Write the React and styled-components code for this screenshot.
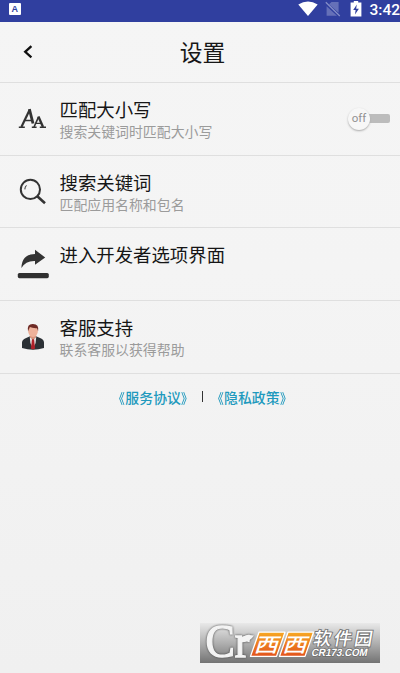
import styled, { createGlobalStyle } from "styled-components";

export default function App() {
    return (
        <>
            <GlobalStyle />
            <Tela>
                <BarraStatus>
                    <IconeApp>A</IconeApp>
                    <Indicadores>
                        <Wifi />
                        <SemChip />
                        <Bateria />
                        <Hora>3:42</Hora>
                    </Indicadores>
                </BarraStatus>
                <Topo>
                    <Voltar aria-label="返回">
                        <svg width="10" height="14" viewBox="0 0 10 14">
                            <path d="M8.4 1.2L2.2 6.8L8.4 12.4" fill="none" stroke="#111" strokeWidth="2.3" />
                        </svg>
                    </Voltar>
                    <Titulo>设置</Titulo>
                </Topo>
                <Item icone={<Letras />} nome="匹配大小写" descricao="搜索关键词时匹配大小写">
                    <Chave><Botao>off</Botao></Chave>
                </Item>
                <Item icone={<Lupa />} nome="搜索关键词" descricao="匹配应用名称和包名" />
                <Item icone={<Seta />} nome="进入开发者选项界面" descricao={"\u00a0"} />
                <Item icone={<Atendente />} nome="客服支持" descricao="联系客服以获得帮助" />
                <Rodape>
                    <Link><Aspas $lado="right">《</Aspas>服务协议<Aspas $lado="left">》</Aspas></Link>
                    <Separador />
                    <Link><Aspas $lado="right">《</Aspas>隐私政策<Aspas $lado="left">》</Aspas></Link>
                </Rodape>
                <Marca />
            </Tela>
        </>
    )
}

function Item({ icone, nome, descricao, children }) {
    return (
        <Linha>
            <Icone>{icone}</Icone>
            <Textos>
                <Nome>{nome}</Nome>
                <Descricao>{descricao}</Descricao>
            </Textos>
            {children}
        </Linha>
    )
}

function Wifi() {
    return (
        <svg width="20" height="16" viewBox="0 0 20 16">
            <path d="M0.3 3.6Q10 -2.6 19.7 3.6L10 15Z" fill="#fff" />
        </svg>
    )
}

function SemChip() {
    return (
        <svg width="16" height="16" viewBox="0 0 16 16">
            <path d="M4 3.2L6.5 1H13.6V11.8ZM1.6 5.2L12 14.8H1.6Z" fill="#6570b8" />
            <path d="M0.8 1.2L14.8 15" stroke="#8790c9" strokeWidth="1.2" />
        </svg>
    )
}

function Bateria() {
    return (
        <svg width="12" height="16" viewBox="0 0 12 16">
            <path d="M0.6 1.6H3.8V0H8.2V1.6H11.4V15.6H0.6Z" fill="#fff" />
            <path d="M6.8 3.6L3.2 9H5.6L5 13.4L8.9 7.7H6.2Z" fill="#303f9f" />
        </svg>
    )
}

function Letras() {
    return (
        <svg width="30" height="24" viewBox="0 0 30 24">
            <g fill="none" stroke="#333">
                <path d="M3.4 20L11.8 2.6" strokeWidth="2.2" />
                <path d="M11.4 2.2L15 16.5" strokeWidth="2.8" />
                <path d="M6.6 13.6H13.4M0.8 20.3H6.8" strokeWidth="1.5" />
                <path d="M16 20L20.6 9.8" strokeWidth="1.6" />
                <path d="M20.4 9.4L25 20" strokeWidth="2.4" />
                <path d="M18 16.4H23.8M13.8 20.3H18.6M21.8 20.3H28" strokeWidth="1.4" />
            </g>
        </svg>
    )
}

function Lupa() {
    return (
        <svg width="30" height="28" viewBox="0 0 30 28">
            <circle cx="12.4" cy="11.4" r="9.6" fill="none" stroke="#333" strokeWidth="2" />
            <path d="M6.8 11.4Q7 8.4 8.6 7.4" fill="none" stroke="#444" strokeWidth="1.1" />
            <path d="M19 18L27 25.2" stroke="#333" strokeWidth="2.6" />
        </svg>
    )
}

function Seta() {
    return (
        <svg width="32" height="30" viewBox="0 0 32 30">
            <path d="M18 0.7L28.2 8.5L18 15.8V11.9Q8.7 11.5 4.4 19Q4.7 5.4 18 4.9Z" fill="#333" />
            <rect x="0.8" y="24" width="31" height="5.2" rx="1.6" fill="#303030" />
        </svg>
    )
}

function Atendente() {
    return (
        <svg width="24" height="28" viewBox="0 0 24 28">
            <path d="M1 25V19.6Q1.3 16.4 4.6 15.3L9 13.3H15L19.6 15.3Q22.8 16.4 23 19.6V25Q12 28.4 1 25Z" fill="#2b3035" />
            <path d="M8.7 13.4L12 16.5L15.3 13.4L14.6 20L12 26L9.4 20Z" fill="#e8e4e4" />
            <path d="M11 16H13L14.1 25.5L12 26.6L9.9 25.5Z" fill="#ad2029" />
            <path d="M9 10H15V14.2L12 16.7L9 14.2Z" fill="#d9947c" />
            <ellipse cx="12" cy="8" rx="4.9" ry="6" fill="#eeb29b" />
            <path d="M7 8.2Q5.7 1.1 11.6 1Q18.3 0.8 17.1 8.2L16 5.2Q11.3 5.4 8.9 4.1Z" fill="#6e2a25" />
        </svg>
    )
}

function Marca() {
    return (
        <FaixaMarca>
            <svg width="180" height="40" viewBox="0 0 180 40" overflow="visible">
                <defs>
                    <linearGradient id="laranja" x1="0" y1="0" x2="0" y2="1">
                        <stop offset="0" stopColor="#f7a823" />
                        <stop offset="1" stopColor="#e2521c" />
                    </linearGradient>
                </defs>
                <Iniciais>
                    <text
                        x="5.5"
                        y="34"
                        fontFamily='"Liberation Serif", serif'
                        fontSize="46"
                        fill="#f4f4f4"
                        stroke="#f4f4f4"
                        strokeWidth="1.3"
                        textLength="44"
                        lengthAdjust="spacingAndGlyphs"
                    >Cr</text>
                    <path d="M39 18.5Q42 10.5 54 12.5Q49 20.5 40 19Z" fill="#f4f4f4" />
                </Iniciais>
                <g fill="url(#laranja)" stroke="#fff" strokeWidth="1.3" strokeLinejoin="round">
                    <path d="M59 9.2H85L76.5 33.4H50.5Z" />
                    <path d="M88 9.2H113.5L105 33.4H79.5Z" />
                </g>
                <g fontFamily='"Noto Sans CJK SC", sans-serif' fontWeight="500" fill="#fff">
                    <text transform="translate(53.5 28.6) skewX(-18) scale(1.1 0.9)" fontSize="22">西</text>
                    <text transform="translate(82 28.6) skewX(-18) scale(1.1 0.9)" fontSize="22">西</text>
                    <text transform="translate(112.5 22.4) skewX(-10)" fontSize="18" textLength="59" stroke="#777" strokeWidth="1.8" paintOrder="stroke">软件园</text>
                </g>
                <text
                    transform="translate(111 33) skewX(-12)"
                    fontFamily='"Liberation Sans", sans-serif'
                    fontSize="10.5"
                    fontWeight="700"
                    fill="#fff"
                    stroke="#6c6c6c"
                    strokeWidth="1.4"
                    paintOrder="stroke"
                    textLength="56"
                    lengthAdjust="spacingAndGlyphs"
                >CR173.COM</text>
            </svg>
        </FaixaMarca>
    )
}

const GlobalStyle = createGlobalStyle`
    body{
        margin: 0;
        background: #f4f4f4;
    }
    svg{
        display: block;
    }
`

const Tela = styled.div`
    box-sizing: border-box;
    position: relative;
    width: 400px;
    height: 673px;
    overflow: hidden;
    background: linear-gradient(#f5f5f5, #f4f4f4 40%, #f0f0f0);
    font-family: "Noto Sans CJK SC", sans-serif;
`

const BarraStatus = styled.div`
    display: flex;
    justify-content: space-between;
    height: 22px;
    background: #303f9f;
`

const IconeApp = styled.div`
    width: 12.5px;
    height: 12px;
    margin: 3px 0 0 8.5px;
    border-radius: 1px;
    background: #fff;
    color: #303f9f;
    font-family: "Liberation Sans", sans-serif;
    font-size: 9px;
    font-weight: 700;
    line-height: 12px;
    text-align: center;
`

const Indicadores = styled.div`
    display: flex;
    align-items: flex-start;
    width: 102.5px;
    padding-top: 1px;

    svg{
        flex: none;
    }
    svg:nth-child(2){
        margin-left: 7px;
    }
    svg:nth-child(3){
        margin-left: 9px;
    }
`

const Hora = styled.span`
    margin-left: 8px;
    color: #fff;
    font-family: Roboto, sans-serif;
    font-size: 15.5px;
    font-weight: 500;
    line-height: 18px;
`

const Topo = styled.header`
    display: grid;
    grid-template-columns: 60px 1fr 55px;
    align-items: center;
    height: 61px;
    border-bottom: 1px solid #dfdfdf;
    box-sizing: border-box;
`

const Voltar = styled.button`
    margin: 0;
    padding: 0 0 0 23px;
    border: 0;
    background: none;
`

const Titulo = styled.h1`
    margin: 0;
    color: #171717;
    font-size: 22.8px;
    font-weight: 400;
    line-height: 34px;
    text-align: center;
`

const Linha = styled.div`
    display: flex;
    align-items: center;
    box-sizing: border-box;
    height: 72.7px;
    padding-right: 10px;
    border-bottom: 1px solid #dfdfdf;
`

const Icone = styled.div`
    display: flex;
    justify-content: center;
    width: 65px;
    margin-right: -5.5px;
`

const Textos = styled.div`
    flex: 1;
`

const Nome = styled.div`
    color: #161616;
    font-size: 18.4px;
    line-height: 24px;
`

const Descricao = styled.div`
    color: #9b9b9b;
    font-size: 13.9px;
    line-height: 20px;
`

const Chave = styled.div`
    display: flex;
    align-items: center;
    justify-content: flex-start;
    width: 31px;
    height: 9px;
    border-radius: 2px;
    background: #bcbcbc;
`

const Botao = styled.div`
    flex: none;
    width: 22px;
    height: 22px;
    margin-left: -11px;
    border-radius: 50%;
    background: #f7f7f7;
    box-shadow: 0 1px 2px #aaa;
    color: #929292;
    font-family: Roboto, sans-serif;
    font-size: 11.5px;
    line-height: 21px;
    text-align: center;
`

const Rodape = styled.div`
    display: flex;
    align-items: center;
    justify-content: center;
    height: 20px;
    margin-top: 13px;
    padding-left: 5px;
`

const Link = styled.span`
    color: #2099bd;
    font-size: 13.9px;
    font-weight: 500;
    line-height: 20px;
`

const Aspas = styled.span`
    display: inline-block;
    transform: scaleX(0.85);
    transform-origin: ${props => props.$lado} center;
`

const Separador = styled.span`
    width: 1.3px;
    height: 11px;
    margin: 0 7px;
    background: #333;
`

const FaixaMarca = styled.div`
    position: absolute;
    right: 20px;
    bottom: 10px;
    width: 180px;
    height: 40px;
    background: linear-gradient(#e9e9e9, #b0b0b0 50%, #737373);
`

const Iniciais = styled.g`
    filter: drop-shadow(0 0 0.8px #444);
`
